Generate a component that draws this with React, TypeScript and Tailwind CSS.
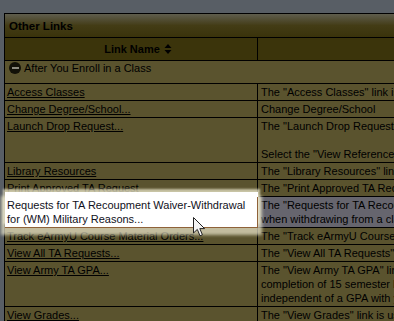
import type { ReactNode } from 'react'

type Row = {
  name: ReactNode
  desc: ReactNode
  link?: boolean
  hover?: boolean
}

const rows: Row[] = [
  { name: 'Access Classes', desc: 'The "Access Classes" link is used to go to your online classes.', link: true },
  { name: 'Change Degree/School...', desc: 'Change Degree/School', link: true },
  {
    name: 'Launch Drop Request...',
    desc: (
      <>
        The "Launch Drop Request" link allows you to drop a class.
        <br />
        &nbsp;
        <br />
        Select the "View Reference Materials" link for more details.
      </>
    ),
    link: true,
  },
  { name: 'Library Resources', desc: 'The "Library Resources" link provides access to the library.', link: true },
  { name: 'Print Approved TA Request', desc: 'The "Print Approved TA Request" link lets you print a request.', link: true },
  {
    name: (
      <>
        Requests for TA Recoupment Waiver-Withdrawal
        <br />
        for (WM) Military Reasons...
      </>
    ),
    desc: (
      <>
        The "Requests for TA Recoupment Waiver" link is used
        <br />
        when withdrawing from a class for military reasons.
      </>
    ),
    hover: true,
  },
  { name: 'Track eArmyU Course Material Orders...', desc: 'The "Track eArmyU Course Material Orders" link...', link: true },
  { name: 'View All TA Requests...', desc: 'The "View All TA Requests" link shows every request.', link: true },
  {
    name: 'View Army TA GPA...',
    desc: (
      <>
        The "View Army TA GPA" link shows your GPA after
        <br />
        completion of 15 semester hours of TA funded classes,
        <br />
        independent of a GPA with your home school.
      </>
    ),
    link: true,
  },
  { name: 'View Grades...', desc: 'The "View Grades" link is used to see your grades.', link: true },
]

function SortIcon() {
  return (
    <svg width="8" height="10" viewBox="0 0 8 10" className="ml-[4px]">
      <path d="M4 0 L7.5 4 L0.5 4 Z" fill="#000" />
      <path d="M0.5 6 L7.5 6 L4 10 Z" fill="#000" />
    </svg>
  )
}

function Cursor() {
  return (
    <svg width="13" height="21" viewBox="0 0 13 21" className="absolute left-[193px] top-[217px] z-20">
      <path
        d="M0.5 0.5 L0.5 16 L4.3 12.4 L7 18.8 L9.4 17.8 L6.8 11.6 L11.6 11.6 Z"
        fill="#f4f4f4"
        stroke="#222"
        strokeWidth="1"
        strokeLinejoin="round"
      />
    </svg>
  )
}

export default function App() {
  return (
    <div className="relative w-[394px] h-[321px] overflow-hidden bg-[#585e65] pt-[13px] pl-[4px] font-['Liberation_Sans',Arial,sans-serif] text-[11px] leading-[14px] text-black">
      <div className="w-[800px] border-l border-t border-black">
        <div className="h-[24px] flex items-center pl-[4px] border-b border-black bg-gradient-to-b from-[#5f5d4d] via-[#433c15] to-[#3a330b] font-bold text-[11.5px]">
          Other Links
        </div>
        <div className="flex h-[23px] border-b border-black bg-[#3b340b]">
          <div className="w-[253px] border-r border-black flex items-center justify-center pl-[14px] font-bold">
            Link Name
            <SortIcon />
          </div>
          <div className="flex-1" />
        </div>
        <div className="h-[23px] border-b border-black bg-[#5a532e] pl-[4px]">
          <div className="flex items-center h-[14px] gap-[3px]">
            <span className="w-[12px] h-[12px] rounded-full bg-[#121108] flex items-center justify-center">
              <span className="w-[7px] h-[2px] bg-[#8c8b80]" />
            </span>
            After You Enroll in a Class
          </div>
        </div>
        {rows.map((r, i) => (
          <div key={i} className="flex bg-[#5a532e]">
            {r.hover ? (
              <div className="relative z-10 w-[253px] px-[2px] py-px border-r border-b border-[#8f6239] bg-white text-[#111122] shadow-[0_-5px_0_0_#ffffff,0_-6px_2px_2px_rgba(238,234,206,0.75),0_3px_3px_4px_rgba(238,234,206,0.7)]">
                {r.name}
              </div>
            ) : (
              <div className="w-[253px] px-[2px] py-px border-r border-b border-black">
                <span className={r.link ? 'underline' : ''}>{r.name}</span>
              </div>
            )}
            <div
              className={`flex-1 px-[3px] py-px border-b border-black whitespace-nowrap ${
                r.hover ? 'bg-[#66656e]' : ''
              }`}
            >
              {r.desc}
            </div>
          </div>
        ))}
      </div>
      <Cursor />
    </div>
  )
}
